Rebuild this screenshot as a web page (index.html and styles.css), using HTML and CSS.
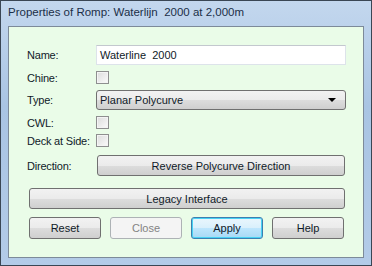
FILE: index.html
```html
<html>
<head>
<link rel="stylesheet" href="styles.css">
</head>
<body>
<div class="win">
  <div class="title">Properties of Romp: Waterlijn&nbsp; 2000 at 2,000m</div>
  <div class="panel">
    <div class="row r-name">
      <span class="lbl">Name:</span>
      <div class="field">Waterline&nbsp; 2000</div>
    </div>
    <div class="row r-chk r-chine">
      <span class="lbl">Chine:</span>
      <span class="chk"></span>
    </div>
    <div class="row r-type">
      <span class="lbl">Type:</span>
      <div class="combo">Planar Polycurve<span class="arrow"></span></div>
    </div>
    <div class="row r-chk r-cwl">
      <span class="lbl">CWL:</span>
      <span class="chk"></span>
    </div>
    <div class="row r-chk r-deck">
      <span class="lbl">Deck at Side:</span>
      <span class="chk"></span>
    </div>
    <div class="row r-dir">
      <span class="lbl">Direction:</span>
      <div class="btn wide">Reverse Polycurve Direction</div>
    </div>
    <div class="row r-legacy">
      <div class="btn full">Legacy Interface</div>
    </div>
    <div class="row r-btns">
      <div class="btn small">Reset</div>
      <div class="btn small disabled">Close</div>
      <div class="btn small default">Apply</div>
      <div class="btn small">Help</div>
    </div>
  </div>
</div>
</body>
</html>
```
FILE: styles.css
```css
body {
margin: 0;
font-family: "Liberation Sans", Arial, sans-serif;
}

.win {
width: 372px; height: 266px;
box-sizing: border-box;
border: 1px solid #3a4654;
background: linear-gradient(#c3d7ee, #a9c4e3 40%, #b3cbe8);
padding: 0 7px 7px 7px;
display: flex; flex-direction: column;
}

.title {
height: 25px;
line-height: 22px;
font-size: 11.5px;
color: #1b2f48;
}

.panel {
flex: 1;
border: 1px solid #7d8a99;
background: #eafce8;
padding: 18px 17px 0 18px;
font-size: 11px;
color: #101a28;
}

.row {
display: flex; align-items: center;
}

.lbl {
width: 69px;
flex: none;
letter-spacing: -0.2px;
}

.r-name { height: 20px; }
.r-chine { margin-top: 6px; }
.r-type { margin-top: 6px; height: 20px; }
.r-cwl { margin-top: 6px; }
.r-deck { margin-top: 5px; }
.r-dir { margin-top: 8px; height: 21px; }
.r-legacy { margin-top: 12px; height: 21px; padding-left: 2px; }
.r-btns { margin-top: 8px; height: 22px; padding-left: 2px; gap: 9px; }

.r-chk { height: 13px; }

.field {
flex: 1;
height: 20px; box-sizing: border-box;
background: white;
border: 1px solid #dde3ea;
border-top-color: #c3c8ce;
padding-left: 3px;
line-height: 18px;
}

.chk {
width: 13px; height: 13px; box-sizing: border-box;
border: 1px solid #8e8f8f;
background: linear-gradient(135deg, #dcdcdc, #fbfbfb);
box-shadow: inset 0 0 0 1px #f4f4f4;
}

.combo {
flex: 1; position: relative;
height: 20px; box-sizing: border-box;
border: 1px solid #707070;
border-radius: 3px;
background: linear-gradient(#f2f2f2 0%, #ebebeb 50%, #dddddd 51%, #cfcfcf 100%);
padding-left: 3px;
line-height: 18px;
}

.arrow {
position: absolute; right: 9px; top: 7px;
border-left: 4px solid transparent;
border-right: 4px solid transparent;
border-top: 4px solid #000;
}

.btn {
height: 100%; box-sizing: border-box;
border: 1px solid #707070;
border-radius: 3px;
background: linear-gradient(#f2f2f2 0%, #ebebeb 50%, #dddddd 51%, #cfcfcf 100%);
display: flex; align-items: center; justify-content: center;
}

.wide { flex: 1; margin-left: 1px; margin-right: 1px; }
.full { flex: 1; margin-right: 1px; }
.small { width: 72px; }

.disabled {
border-color: #adb2b5;
background: #f4f4f4;
color: #838383;
}

.default {
border-color: #3c7fb1;
background: linear-gradient(#eaf6fd 0%, #d9f0fc 50%, #bee6fd 51%, #a7d9f5 100%);
box-shadow: inset 0 0 0 1px #48d2f3;
}
```
